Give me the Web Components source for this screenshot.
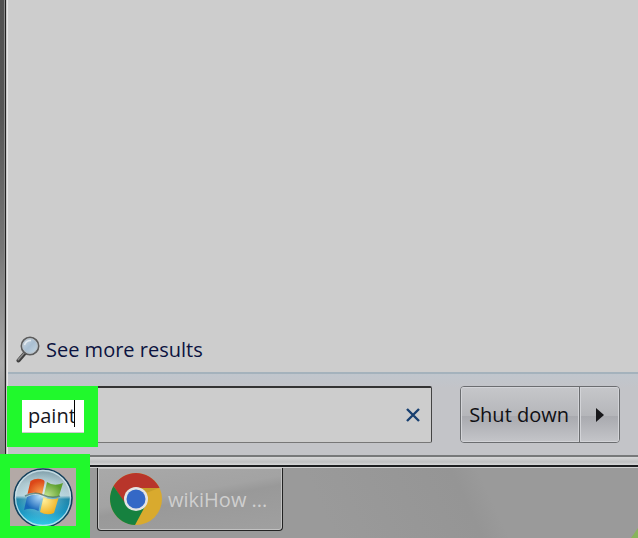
<!DOCTYPE html>
<html lang="en">
<head>
<meta charset="utf-8">
<title>Start menu</title>
<style>
  html, body { margin: 0; height: 100%; }
  body { font-family: "Open Sans", "Noto Sans", sans-serif; font-size: 20px; overflow: hidden; }
</style>
</head>
<body>
<desktop-shell>
  <start-menu>
    <more-results slot="results">See more results</more-results>
    <search-field slot="bar" value="paint"></search-field>
    <power-button slot="bar">Shut down</power-button>
  </start-menu>
  <task-bar>
    <start-orb></start-orb>
    <task-button>wikiHow ...</task-button>
  </task-bar>
</desktop-shell>

<script>
class ShadowElement extends HTMLElement {
  constructor() {
    super();
    this.attachShadow({ mode: 'open' });
  }

  connectedCallback() {
    if (this._rendered) return;
    this.shadowRoot.innerHTML = this.template();
    this._rendered = true;
  }
}

customElements.define('desktop-shell', class extends ShadowElement {
  template() {
    return `
      <style>
        :host { display:flex; flex-direction:column; min-height:100vh; background:#9a9a9a; --mark:#20f92c; }
        ::slotted(start-menu) { flex:1; }
      </style>
      <slot></slot>
    `;
  }
});

customElements.define('start-menu', class extends ShadowElement {
  template() {
    return `
      <style>
        :host { display:grid; grid-template-columns:8px 1fr; background:#cdcdcd; }
        .edge { background:
          linear-gradient(90deg, transparent 4px, #888 4px, #888 5px, #222 5px, #222 6px, #aaa 6px, #e6e6e6 7px),
          linear-gradient(#505050, #555 25%, #777 55%, #aaa 80%, #888); }
        .body { display:flex; flex-direction:column; min-width:0; }
        .results { flex:1; display:flex; align-items:flex-end; padding:0 8px 8px; }
        .bar { display:flex; align-items:center; gap:28px; padding:12px 18px 12px 14px; border-top:2px solid #a4b2bc;
          background:linear-gradient(#c0c6cd, #c3c4c8 14px, #c3c4c8); }
      </style>
      <div class="edge"></div>
      <div class="body">
        <div class="results"><slot name="results"></slot></div>
        <div class="bar"><slot name="bar"></slot></div>
      </div>
    `;
  }
});

customElements.define('more-results', class extends ShadowElement {
  template() {
    return `
      <style>
        :host { display:block; }
        a { display:flex; align-items:center; gap:6px; color:#0b1340; text-decoration:none; line-height:28px; }
        svg { display:block; }
      </style>
      <a href="#results">
        <svg width="24" height="28" viewBox="0 0 24 28" aria-hidden="true">
          <defs>
            <linearGradient id="lens" x1="0" y1="0" x2="1" y2="1">
              <stop offset="0" stop-color="#d3dde6"/>
              <stop offset=".5" stop-color="#a9bfd2"/>
              <stop offset="1" stop-color="#cbdae4"/>
            </linearGradient>
          </defs>
          <path d="M9 17 2.500 24.500" stroke="#3e3e3e" stroke-width="4" stroke-linecap="round"/>
          <path d="M8.500 16.500 2.200 23.700" stroke="#8b8b8b" stroke-width="1.500" stroke-linecap="round"/>
          <circle cx="14" cy="10" r="8.600" fill="url(#lens)" stroke="#5c5c5c" stroke-width="1.800"/>
          <circle cx="14" cy="10" r="7.300" fill="none" stroke="#b9c1c7" stroke-width="1"/>
          <path d="M8.500 9Q10 4.500 15 4.500" fill="none" stroke="#e3eaf0" stroke-width="1.500"/>
        </svg>
        <slot></slot>
      </a>
    `;
  }
});

customElements.define('search-field', class extends ShadowElement {
  template() {
    return `
      <style>
        :host { display:block; flex:1; min-width:0; position:relative; }
        form { display:flex; align-items:center; justify-content:space-between; height:54px; margin:0; padding-right:7px;
          border:1px solid #777; border-top:2px solid #333; border-right-color:#444; border-left:0; background:#cdcdcd; border-radius:0 2px 2px 0; }
        label { display:flex; box-sizing:border-box; width:62px; height:34px; padding-left:6px; background:#fff; }
        input { width:46px; height:34px; padding:0; border:0; outline:0; background:none; color:#15151c; font:inherit; }
        .caret { width:1px; height:28px; margin-top:1px; background:#000; }
        button { display:flex; padding:4px; border:0; background:none; }
        .mark { position:absolute; top:0; left:-15px; box-sizing:border-box; width:91px; height:61px;
          border:14px solid var(--mark); border-left-width:15px; pointer-events:none; }
      </style>
      <form>
        <label><input type="text" aria-label="Search programs and files" value="${this.getAttribute('value') || ''}"><span class="caret"></span></label>
        <button type="button" aria-label="Clear search">
          <svg width="14" height="14" viewBox="0 0 14 14"><path d="M1 1 13 13M13 1 1 13" stroke="#173f70" stroke-width="2.400"/></svg>
        </button>
      </form>
      <div class="mark"></div>
    `;
  }
});

customElements.define('power-button', class extends ShadowElement {
  template() {
    return `
      <style>
        :host { display:flex; box-sizing:border-box; height:57px; border:1px solid #6b6d70; border-radius:4px; overflow:hidden;
          background:linear-gradient(#c6c7ca, #b5b6ba 52%, #a9aaaf 53%, #c4c5c9); }
        button { display:flex; align-items:center; justify-content:center; padding:0 10px 0 8px; border:0; background:none;
          color:#101014; font:inherit; white-space:nowrap; box-shadow:inset 0 0 0 1px #d3d4d8; }
        .more { width:40px; padding:0; border-left:1px solid #6b6d70; }
      </style>
      <button type="button"><slot></slot></button>
      <button type="button" class="more" aria-label="Shut down options">
        <svg width="8" height="14" viewBox="0 0 8 14"><path d="M0 0 8 7 0 14Z" fill="#17171a"/></svg>
      </button>
    `;
  }
});

customElements.define('task-bar', class extends ShadowElement {
  template() {
    return `
      <style>
        :host { display:block; position:relative; }
        .rim { height:8px; border-top:2px solid #77797a; border-bottom:2px solid #1c1e20; background:linear-gradient(#d6d7d8, #bfc0c1 5px, #d6d7d8); }
        .items { display:flex; gap:7px; height:71px; box-sizing:border-box; border-top:1px solid #d0d0d0;
          background:linear-gradient(65deg, #9a9a9a 50%, #959595 72%, #9a9a9a 76%); }
        .leaf { position:absolute; right:0; bottom:0; width:7px; height:10px; background:#87b45b; clip-path:polygon(100% 0, 100% 100%, 0 100%); }
      </style>
      <div class="rim"></div>
      <div class="items"><slot></slot></div>
      <div class="leaf"></div>
    `;
  }
});

customElements.define('start-orb', class extends ShadowElement {
  template() {
    return `
      <style>
        :host { display:block; width:90px; position:relative; }
        button { display:block; width:66px; height:58px; margin:0 0 0 10px; padding:0; border:0; background:#b3a9a6; overflow:hidden; }
        svg { display:block; }
        .mark { position:absolute; top:-14px; left:0; right:0; bottom:0; border:solid var(--mark); border-width:14px 14px 12px 10px; pointer-events:none; }
      </style>
      <button type="button" aria-label="Start">
        <svg width="66" height="60" viewBox="0 0 66 60">
          <defs>
            <linearGradient id="sky" x1="0" y1="0" x2="0" y2="1">
              <stop offset="0" stop-color="#7d8f98"/>
              <stop offset=".25" stop-color="#b4bfc4"/>
              <stop offset=".46" stop-color="#c2d0d6"/>
              <stop offset=".52" stop-color="#197ba0"/>
              <stop offset=".75" stop-color="#1590bd"/>
              <stop offset="1" stop-color="#35d0ee"/>
            </linearGradient>
            <radialGradient id="glow" cx=".48" cy=".45" r=".55">
              <stop offset="0" stop-color="#fff" stop-opacity=".65"/>
              <stop offset=".5" stop-color="#bff0f8" stop-opacity=".35"/>
              <stop offset="1" stop-color="#44cdf0" stop-opacity="0"/>
            </radialGradient>
            <radialGradient id="red" cx=".8" cy=".9" r="1"><stop offset="0" stop-color="#f9a650"/><stop offset=".8" stop-color="#dc4718"/></radialGradient>
            <radialGradient id="green" cx=".1" cy=".9" r="1"><stop offset="0" stop-color="#c5e591"/><stop offset=".9" stop-color="#5c9f2e"/></radialGradient>
            <radialGradient id="blue" cx=".9" cy=".1" r="1"><stop offset="0" stop-color="#b4dcfb"/><stop offset=".9" stop-color="#1767b9"/></radialGradient>
            <radialGradient id="gold" cx=".2" cy=".2" r="1"><stop offset="0" stop-color="#fff09b"/><stop offset=".9" stop-color="#f0ac18"/></radialGradient>
          </defs>
          <circle cx="33" cy="30" r="29" fill="url(#sky)" stroke="#14405c" stroke-width="1.600"/>
          <circle cx="33" cy="30" r="28" fill="url(#glow)"/>
          <circle cx="33" cy="30" r="27.500" fill="none" stroke="#d2e8f0" stroke-opacity=".8" stroke-width="1.300"/>
          <path d="M20.500 13Q27 9 33.500 12Q35 13 34.500 15L32 27Q25 23 17.500 26Z" fill="url(#red)"/>
          <path d="M37 14Q44 19 53 15L49 28Q41 31 34 27Z" fill="url(#green)"/>
          <path d="M17 29Q24 25 31.500 28L28.500 43Q21 39 14 42Z" fill="url(#blue)"/>
          <path d="M33.500 29Q41 33 48.500 30L44 45Q37 48 30 44Z" fill="url(#gold)"/>
          <path d="M15 28Q25 23 33 27Q42 31 50 28" fill="none" stroke="#39645a" stroke-opacity=".65" stroke-width="1.500"/>
        </svg>
      </button>
      <div class="mark"></div>
    `;
  }
});

customElements.define('task-button', class extends ShadowElement {
  template() {
    return `
      <style>
        :host { display:block; }
        button { display:flex; align-items:center; gap:6px; box-sizing:border-box; width:186px; height:63px; padding:0 12px; margin:0;
          border:1px solid #222; border-top:0; border-radius:0 0 4px 4px; color:#cfcfcf; font:inherit; white-space:nowrap;
          box-shadow:inset 0 0 0 1px #c2c2c2; background:linear-gradient(170deg, #a9a9a9, #a3a3a3 42%, #999 52%, #a0a0a0); }
        svg { flex:none; }
      </style>
      <button type="button">
        <svg width="52" height="52" viewBox="0 0 52 52" aria-hidden="true">
          <circle cx="26" cy="26" r="26" fill="#d9aa2e"/>
          <path d="M3.500 13A26 26 0 0 1 48.500 13L49.500 15H26L15.500 32Z" fill="#b8352b"/>
          <path d="M3.500 13A26 26 0 0 0 25 52L36 31.500 26 37 16.500 32Z" fill="#16813f"/>
          <path d="M26 15H49L36 20Z" fill="#b58d24" opacity=".5"/>
          <circle cx="26" cy="26" r="12" fill="#e4e4e4"/>
          <circle cx="26" cy="26" r="9.500" fill="#3468c6"/>
        </svg>
        <slot></slot>
      </button>
    `;
  }
});
</script>
</body>
</html>
